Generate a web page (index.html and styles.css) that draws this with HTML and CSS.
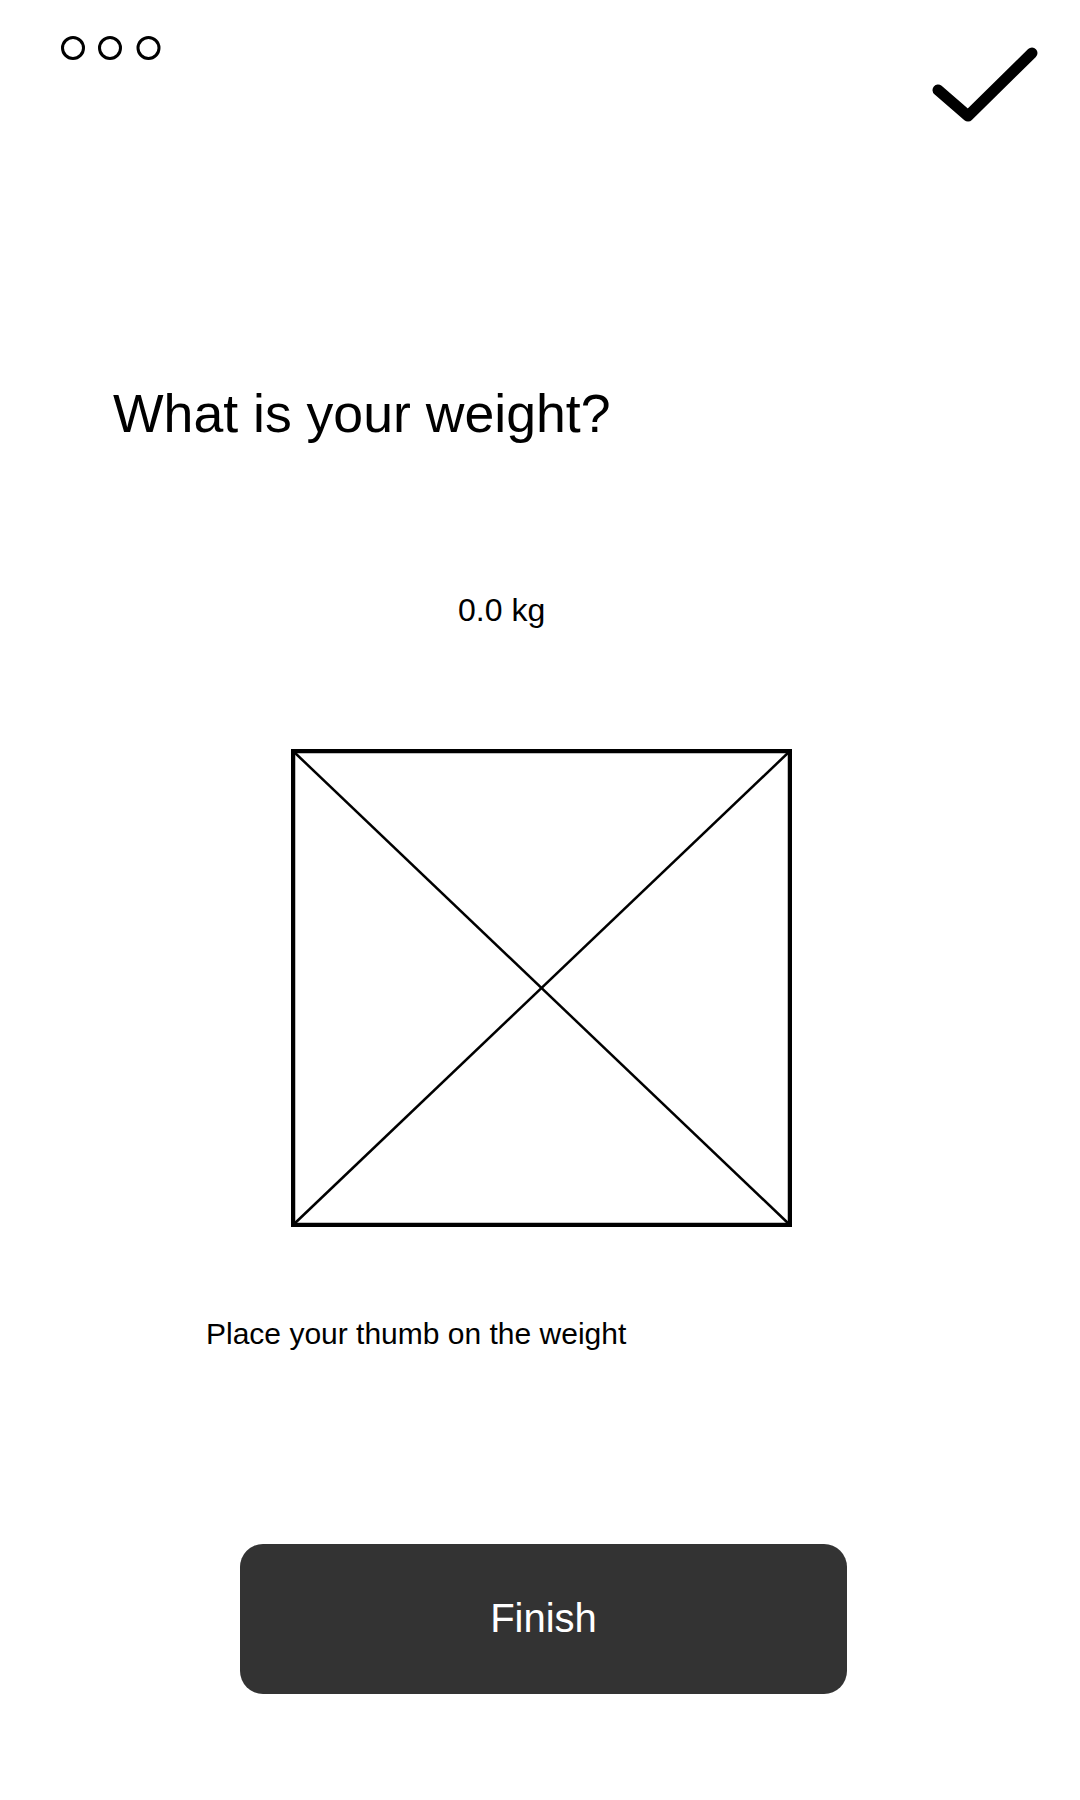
FILE: index.html
```html
<!DOCTYPE html>
<html lang="en">
<head>
    <meta charset="UTF-8">
    <meta name="viewport" content="width=device-width, initial-scale=1.0">
    <title>Weight</title>
    <link rel="stylesheet" href="styles.css">
</head>
<body>
    <div class="screen">
        <div class="top-bar">
            <svg class="dots" width="104" height="30" viewBox="0 0 104 30">
                <circle cx="13" cy="14" r="10.5" />
                <circle cx="50" cy="14" r="10.5" />
                <circle cx="88.5" cy="14" r="10.5" />
            </svg>
            <svg class="check" width="110" height="80" viewBox="0 0 110 80">
                <polyline points="8,46 38,72 102,9" />
            </svg>
        </div>

        <h1 class="question">What is your weight?</h1>

        <p class="reading">0.0 kg</p>

        <svg class="scale-image" width="501" height="478" viewBox="0 0 501 478">
            <line x1="2" y1="2" x2="499" y2="476" />
            <line x1="499" y1="2" x2="2" y2="476" />
            <rect x="2" y="2" width="497" height="474" />
        </svg>

        <p class="hint">Place your thumb on the weight</p>

        <button class="finish-btn" type="button">Finish</button>
    </div>
</body>
</html>
```

FILE: styles.css
```css
body {
    margin: 0;
    background: #fff;
    font-family: "Liberation Sans", Arial, sans-serif;
    color: #000;
}
.screen {
    width: 1080px;
    height: 1800px;
}
.top-bar {
    display: flex;
    justify-content: space-between;
    align-items: flex-start;
    padding: 34px 40px 0 60px;
}
.dots circle {
    fill: none;
    stroke: #000;
    stroke-width: 3;
}
.check {
    margin-top: 10px;
}
.check polyline {
    fill: none;
    stroke: #000;
    stroke-width: 11;
    stroke-linecap: round;
    stroke-linejoin: round;
}
.question {
    margin: 263px 0 0 113px;
    font-size: 53.6px;
    font-weight: normal;
    line-height: 1;
}
.reading {
    margin: 153px 0 0 458px;
    font-size: 32px;
    line-height: 1;
}
.scale-image {
    display: block;
    margin: 123px 0 0 291px;
}
.scale-image rect {
    fill: none;
    stroke: #000;
    stroke-width: 4.5;
}
.scale-image line {
    stroke: #000;
    stroke-width: 2.5;
}
.hint {
    margin: 92px 0 0 206px;
    font-size: 30px;
    line-height: 1;
}
.finish-btn {
    display: block;
    margin: 195px 0 0 240px;
    width: 607px;
    height: 150px;
    border: none;
    border-radius: 23px;
    background: #333;
    color: #fff;
    font-family: "Liberation Sans", Arial, sans-serif;
    font-size: 40px;
    cursor: pointer;
}
```
